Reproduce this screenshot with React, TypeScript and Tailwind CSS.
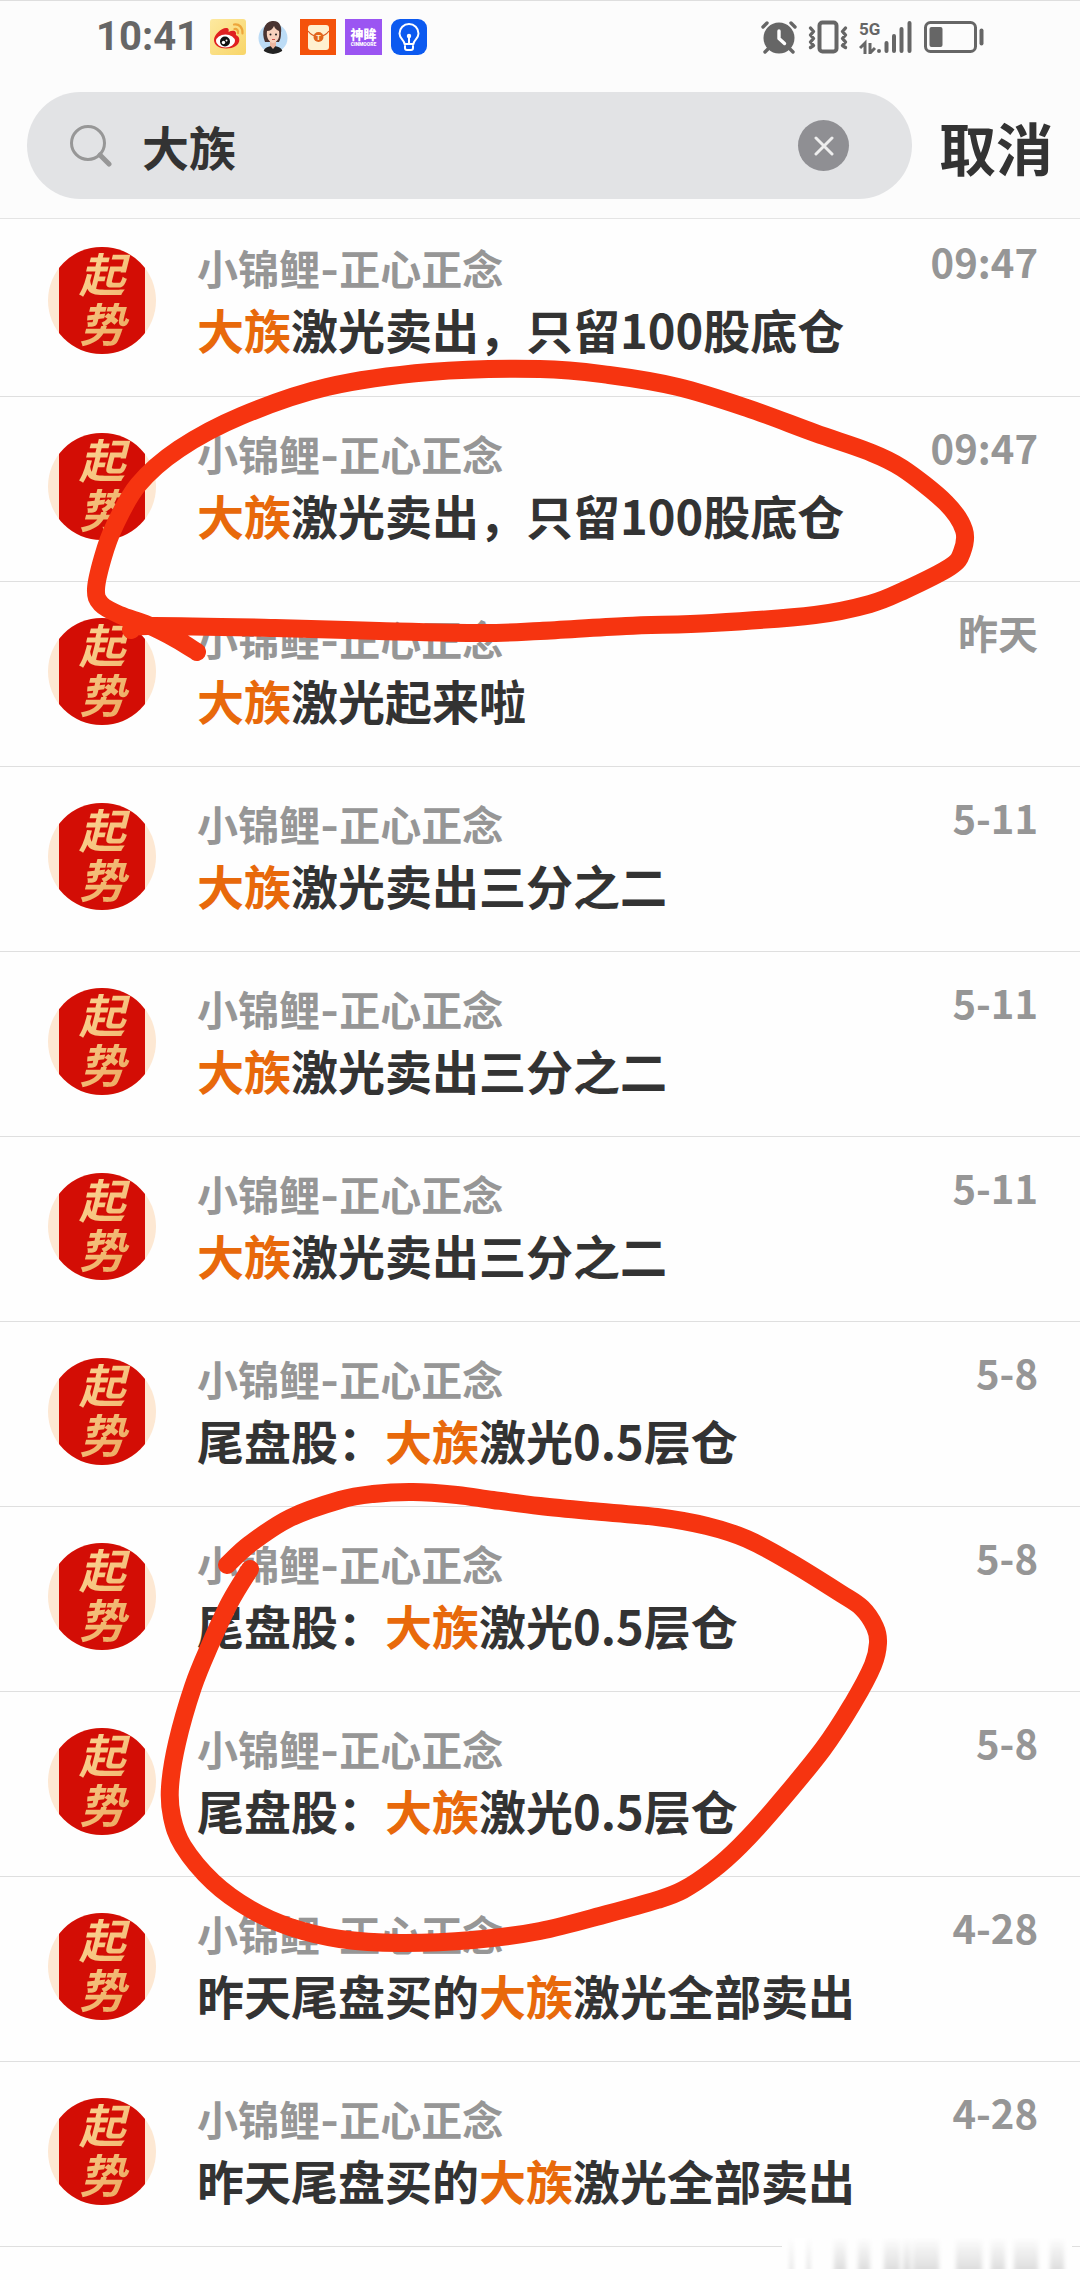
import { useState } from 'react';

type Point = [number, number];

type Message = {
  id: number;
  before: string;
  after: string;
  date: string;
};

const KEYWORD = '大族';

const messages: Message[] = [
  { id: 1, before: '', after: '激光卖出，只留100股底仓', date: '09:47' },
  { id: 2, before: '', after: '激光卖出，只留100股底仓', date: '09:47' },
  { id: 3, before: '', after: '激光起来啦', date: '昨天' },
  { id: 4, before: '', after: '激光卖出三分之二', date: '5-11' },
  { id: 5, before: '', after: '激光卖出三分之二', date: '5-11' },
  { id: 6, before: '', after: '激光卖出三分之二', date: '5-11' },
  { id: 7, before: '尾盘股：', after: '激光0.5层仓', date: '5-8' },
  { id: 8, before: '尾盘股：', after: '激光0.5层仓', date: '5-8' },
  { id: 9, before: '尾盘股：', after: '激光0.5层仓', date: '5-8' },
  { id: 10, before: '昨天尾盘买的', after: '激光全部卖出', date: '4-28' },
  { id: 11, before: '昨天尾盘买的', after: '激光全部卖出', date: '4-28' },
];

// Hand-drawn marker strokes
const strokes: Point[][] = [
  [
    [197, 652], [176, 639], [148, 625], [120, 615], [101, 604], [96, 589],
    [103, 557], [114, 527], [138, 485], [179, 449], [241, 416], [327, 387],
    [430, 372], [540, 369], [609, 375], [678, 387], [747, 408], [815, 433],
    [867, 451], [902, 468], [946, 503], [964, 530], [962, 552], [950, 567],
    [905, 590], [870, 604], [815, 615], [712, 623], [626, 626], [540, 631],
    [482, 633], [379, 631], [275, 628], [148, 626], [131, 630],
  ],
  [
    [227, 1565], [250, 1544], [290, 1518], [340, 1500], [373, 1494],
    [413, 1492], [457, 1495], [493, 1500], [540, 1506], [590, 1511],
    [657, 1517], [707, 1526], [747, 1539], [790, 1562], [840, 1593],
    [862, 1608], [875, 1627], [878, 1643], [873, 1665], [853, 1703],
    [823, 1749], [773, 1810], [740, 1846], [713, 1870], [683, 1890],
    [657, 1900], [607, 1914], [540, 1931], [473, 1940], [400, 1943],
    [340, 1939], [290, 1927], [250, 1909], [213, 1882], [183, 1846],
    [172, 1817], [170, 1787], [177, 1743], [193, 1687], [210, 1645],
    [230, 1602], [250, 1569],
  ],
];

function smoothPath(points: Point[]) {
  let d = `M${points[0][0]} ${points[0][1]}`;
  for (let i = 0; i < points.length - 1; i++) {
    const p0 = points[i - 1] ?? points[i];
    const p1 = points[i];
    const p2 = points[i + 1];
    const p3 = points[i + 2] ?? p2;
    d += `C${p1[0] + (p2[0] - p0[0]) / 6} ${p1[1] + (p2[1] - p0[1]) / 6}`;
    d += ` ${p2[0] - (p3[0] - p1[0]) / 6} ${p2[1] - (p3[1] - p1[1]) / 6}`;
    d += ` ${p2[0]} ${p2[1]}`;
  }
  return d;
}

function WeiboIcon() {
  return (
    <svg viewBox="0 0 36 36" className="h-9 w-9">
      <defs>
        <linearGradient id="weibo" x1="0" y1="0" x2="1" y2="1">
          <stop offset="0" stopColor="#fde9a0" />
          <stop offset="1" stopColor="#f8d568" />
        </linearGradient>
      </defs>
      <rect width="36" height="36" rx="3" fill="url(#weibo)" />
      <path
        d="M4 21c0-5 7-12 12-12 3 0 3 2 2.500 4 3-1.500 7-2 7.500 1 .2 1-.2 2-.2 2 2 .8 3.500 2 3.500 5 0 5-6 8.500-13 8.500S4 26 4 21z"
        fill="#e02020"
      />
      <ellipse cx="15.500" cy="22" rx="9.500" ry="6.500" fill="#fff" />
      <circle cx="15" cy="22.500" r="5" fill="#111" />
      <circle cx="13.500" cy="23.500" r="1.700" fill="#fff" />
      <circle cx="16.500" cy="21.500" r="1" fill="#fff" />
      <path
        d="M24 5.500c5-1 9 3 8.500 9M24.500 10c2.500-.3 4 1.500 3.500 4"
        fill="none"
        stroke="#eda63b"
        strokeWidth="2.200"
        strokeLinecap="round"
      />
    </svg>
  );
}

function PortraitIcon() {
  return (
    <svg viewBox="0 0 30 34" className="h-[34px] w-[30px]">
      <defs>
        <clipPath id="portrait">
          <path d="M0 0H30V19A15 15 0 0 1 0 19z" />
        </clipPath>
      </defs>
      <circle cx="15" cy="18" r="14.500" fill="#bcdcf6" />
      <g clipPath="url(#portrait)">
        <path d="M7 22C3 12 6 2 14 1c8-1 10 6 9 12 0 5-1 7-2 9z" fill="#4a3431" />
        <path d="M12 20h6v7h-6z" fill="#edb79f" />
        <path d="M5 34c0-6 5-8 10-8s10 2 10 8z" fill="#222" />
        <path d="M12 25.500l3 3.500 3-3.500z" fill="#edb79f" />
        <path d="M9 11c3 0 6-2 7-5 1 3 3 4 5 5 1 6-1 11-6 12-4-1-7-5-6-12z" fill="#f8d2bd" />
        <circle cx="12.500" cy="14.500" r="1" fill="#222" />
        <circle cx="18" cy="14.500" r="1" fill="#222" />
        <path d="M14 19.500h3" stroke="#c8504a" strokeWidth="1" />
      </g>
    </svg>
  );
}

function EnvelopeIcon() {
  return (
    <svg viewBox="0 0 36 36" className="h-9 w-9">
      <rect width="36" height="36" fill="#f4520b" />
      <rect x="8" y="6" width="21" height="25" rx="3" fill="#fff0cf" />
      <path d="M8 12c5 7 16 7 21 0" fill="none" stroke="#d9551a" strokeWidth="1.200" />
      <circle cx="18.500" cy="18" r="5" fill="#e2641b" />
      <text
        x="18.500"
        y="21"
        textAnchor="middle"
        fill="#fff0cf"
        className="font-['Roboto',sans-serif] text-[8px] font-bold"
      >
        T
      </text>
    </svg>
  );
}

function ShenmouIcon() {
  return (
    <div className="flex h-9 w-[37px] flex-col items-center justify-center bg-[#9b55f2] text-white">
      <span className="text-[13px] leading-[14px] font-black">神眸</span>
      <span className="font-['Roboto',sans-serif] text-[5px] leading-[6px] font-black">CINMOORE</span>
    </div>
  );
}

function BulbIcon() {
  return (
    <svg viewBox="0 0 36 36" className="h-9 w-9">
      <rect width="36" height="36" rx="9" fill="#0c5af0" />
      <g fill="none" stroke="#fff" strokeWidth="2" strokeLinecap="round" strokeLinejoin="round">
        <path d="M13.500 25c0-4-5-5-5-10.500a9.500 9.500 0 0 1 19 0C27.500 20 22.500 21 22.500 25z" />
        <path d="M14 27v2q0 2 2 2h4q2 0 2-2v-2M18 18v6" />
      </g>
      <circle cx="18" cy="17" r="2.200" fill="#fff" />
    </svg>
  );
}

function AlarmIcon() {
  return (
    <svg viewBox="0 0 36 34" className="h-[34px] w-9">
      <g stroke="#666" strokeWidth="3.400" strokeLinecap="round">
        <path d="M2 7l4-4M34 7l-4-4M7 29l-3 3M29 29l3 3" />
      </g>
      <circle cx="18" cy="18" r="15.500" fill="#666" />
      <path
        d="M18 11v7.500l5.500 5"
        fill="none"
        stroke="#fff"
        strokeWidth="3.400"
        strokeLinecap="round"
        strokeLinejoin="round"
      />
    </svg>
  );
}

function VibrateIcon() {
  return (
    <svg viewBox="0 0 40 34" className="h-[34px] w-10">
      <rect x="11.500" y="2.500" width="17" height="29" rx="3" fill="none" stroke="#666" strokeWidth="4" />
      <path
        d="M2.500 8l3 3.500-3 3.500 3 3.500-3 3.500 3 3.500-3 2M37.500 8l-3 3.500 3 3.500-3 3.500 3 3.500-3 3.500 3 2"
        fill="none"
        stroke="#666"
        strokeWidth="3.400"
        strokeLinecap="round"
        strokeLinejoin="round"
      />
    </svg>
  );
}

function SignalIcon() {
  return (
    <svg viewBox="0 0 54 34" className="h-[34px] w-[54px]">
      <text x="0" y="15" fill="#666" className="font-['Roboto',sans-serif] text-[17px] font-bold">
        5G
      </text>
      <path d="M1 28l5-5v11M11 23v11M11 33l5-5" fill="none" stroke="#666" strokeWidth="3" />
      <path
        d="M20 31v0M27.500 31v-8M35 31v-15M42.500 31v-22M50.500 31v-28"
        fill="none"
        stroke="#666"
        strokeWidth="4"
        strokeLinecap="round"
      />
    </svg>
  );
}

function BatteryIcon() {
  return (
    <svg viewBox="0 0 60 32" className="h-8 w-[60px]">
      <rect x="1.500" y="1.500" width="50" height="29" rx="5" fill="none" stroke="#666" strokeWidth="3" />
      <rect x="5.500" y="6" width="13" height="20" rx="2" fill="#666" />
      <path d="M57.500 9.500v13" stroke="#666" strokeWidth="4" strokeLinecap="round" />
    </svg>
  );
}

function StatusBar() {
  return (
    <div className="flex h-[72px] items-center justify-between border-t border-[#dedede] px-24">
      <div className="flex items-center">
        <span className="w-[114px] font-['Roboto',sans-serif] text-[40px] leading-[40px] font-bold text-[#666]">
          10:41
        </span>
        <WeiboIcon />
        <div className="ml-3 flex items-center gap-3">
          <PortraitIcon />
          <EnvelopeIcon />
        </div>
        <div className="ml-[9px] flex items-center gap-[9px]">
          <ShenmouIcon />
          <BulbIcon />
        </div>
      </div>
      <div className="flex items-center gap-[11px]">
        <AlarmIcon />
        <VibrateIcon />
        <SignalIcon />
        <BatteryIcon />
      </div>
    </div>
  );
}

function SearchBar() {
  const [query, setQuery] = useState(KEYWORD);

  return (
    <form className="flex items-center gap-[27px] px-[27px] pt-5 pb-[19px]">
      <div className="flex h-[107px] min-w-0 flex-1 items-center rounded-full bg-[#e2e3e5] pr-[63px] pl-[43px]">
        <svg viewBox="0 0 42 42" className="h-[42px] w-[42px] shrink-0" fill="none" stroke="#979797">
          <circle cx="18" cy="18" r="16.500" strokeWidth="3" />
          <path d="M30 30l9 9" strokeWidth="5" strokeLinecap="round" />
        </svg>
        <input
          type="text"
          aria-label="搜索"
          value={query}
          onChange={(e) => setQuery(e.target.value)}
          className="ml-[30px] min-w-0 flex-1 bg-transparent text-[47px] leading-[60px] font-bold text-[#333] outline-none"
        />
        <button
          type="button"
          aria-label="清除"
          onClick={() => setQuery('')}
          className="flex h-[51px] w-[51px] shrink-0 items-center justify-center rounded-full bg-[#8f8f93]"
        >
          <svg viewBox="0 0 20 20" className="h-5 w-5" stroke="#eee" strokeWidth="3" strokeLinecap="round">
            <path d="M2 2l16 16M18 2L2 18" />
          </svg>
        </button>
      </div>
      <button type="button" className="shrink-0 text-[57px] leading-[80px] font-bold text-[#333]">
        取消
      </button>
    </form>
  );
}

function Avatar() {
  return (
    <div className="h-[107px] w-[108px] shrink-0 overflow-hidden rounded-full bg-[#fde8d3] px-[11px]">
      <div className="h-full bg-[#d30d05] text-center">
        <p className="bg-linear-to-br from-[#ffe0a0] to-[#e9a257] bg-clip-text text-[46px] leading-[50px] font-bold text-transparent italic">
          起
          <br />
          势
        </p>
      </div>
    </div>
  );
}

function MessageRow({ message }: { message: Message }) {
  return (
    <li className="flex items-start border-b border-[#dfdfdf] pt-9 pr-[42px] pb-[30px] pl-12 first:pt-7 first:pb-[31px]">
      <Avatar />
      <div className="ml-[41px] min-w-0 flex-1">
        <p className="font-['Inter','Noto_Sans_CJK_SC',sans-serif] text-[41px] leading-[46px] font-bold text-[#969696]">
          小锦鲤-正心正念
        </p>
        <p className="text-[47px] leading-[72px] font-bold text-[#333]">
          {message.before}
          <span className="text-[#e8690b]">{KEYWORD}</span>
          {message.after}
        </p>
      </div>
      <time className="text-[40px] leading-7 font-bold text-[#969696]">{message.date}</time>
    </li>
  );
}

function Marker() {
  return (
    <svg
      viewBox="0 0 1080 2280"
      className="pointer-events-none absolute top-0 left-0 w-full"
      fill="none"
      stroke="#f63410"
      strokeWidth="18"
      strokeLinecap="round"
      strokeLinejoin="round"
    >
      {strokes.map((points, i) => (
        <path key={i} d={smoothPath(points)} />
      ))}
    </svg>
  );
}

// Faded strip in the bottom corner, [x, width] of every bar
const bars: Point[] = [
  [52, 12], [76, 12], [102, 16], [121, 8], [131, 26], [174, 26], [209, 14], [232, 24], [268, 14],
];

function FadedStrip() {
  return (
    <svg viewBox="0 0 290 34" className="pointer-events-none absolute right-2 bottom-2 h-[34px] w-[290px]">
      <defs>
        <linearGradient id="fade" x1="0" y1="0" x2="0" y2="1">
          <stop offset="0" stopColor="#fdfdfd" />
          <stop offset="1" stopColor="#dedede" />
        </linearGradient>
        <filter id="soft">
          <feGaussianBlur stdDeviation="2 0" />
        </filter>
      </defs>
      <rect width="290" height="34" fill="#fefefe" />
      <g filter="url(#soft)">
        <rect x="8" width="20" height="31" fill="url(#fade)" />
        <rect x="11" width="14" height="31" fill="#fff" />
        {bars.map(([x, width]) => (
          <rect key={x} x={x} width={width} height="31" fill="url(#fade)" />
        ))}
      </g>
    </svg>
  );
}

export default function App() {
  return (
    <div className="relative min-h-screen bg-[#fefefe] font-['Noto_Sans_CJK_SC',sans-serif]">
      <header className="border-b border-[#e4e4e4] bg-[#fcfcfc]">
        <StatusBar />
        <SearchBar />
      </header>
      <ul>
        {messages.map((message) => (
          <MessageRow key={message.id} message={message} />
        ))}
      </ul>
      <Marker />
      <FadedStrip />
    </div>
  );
}
